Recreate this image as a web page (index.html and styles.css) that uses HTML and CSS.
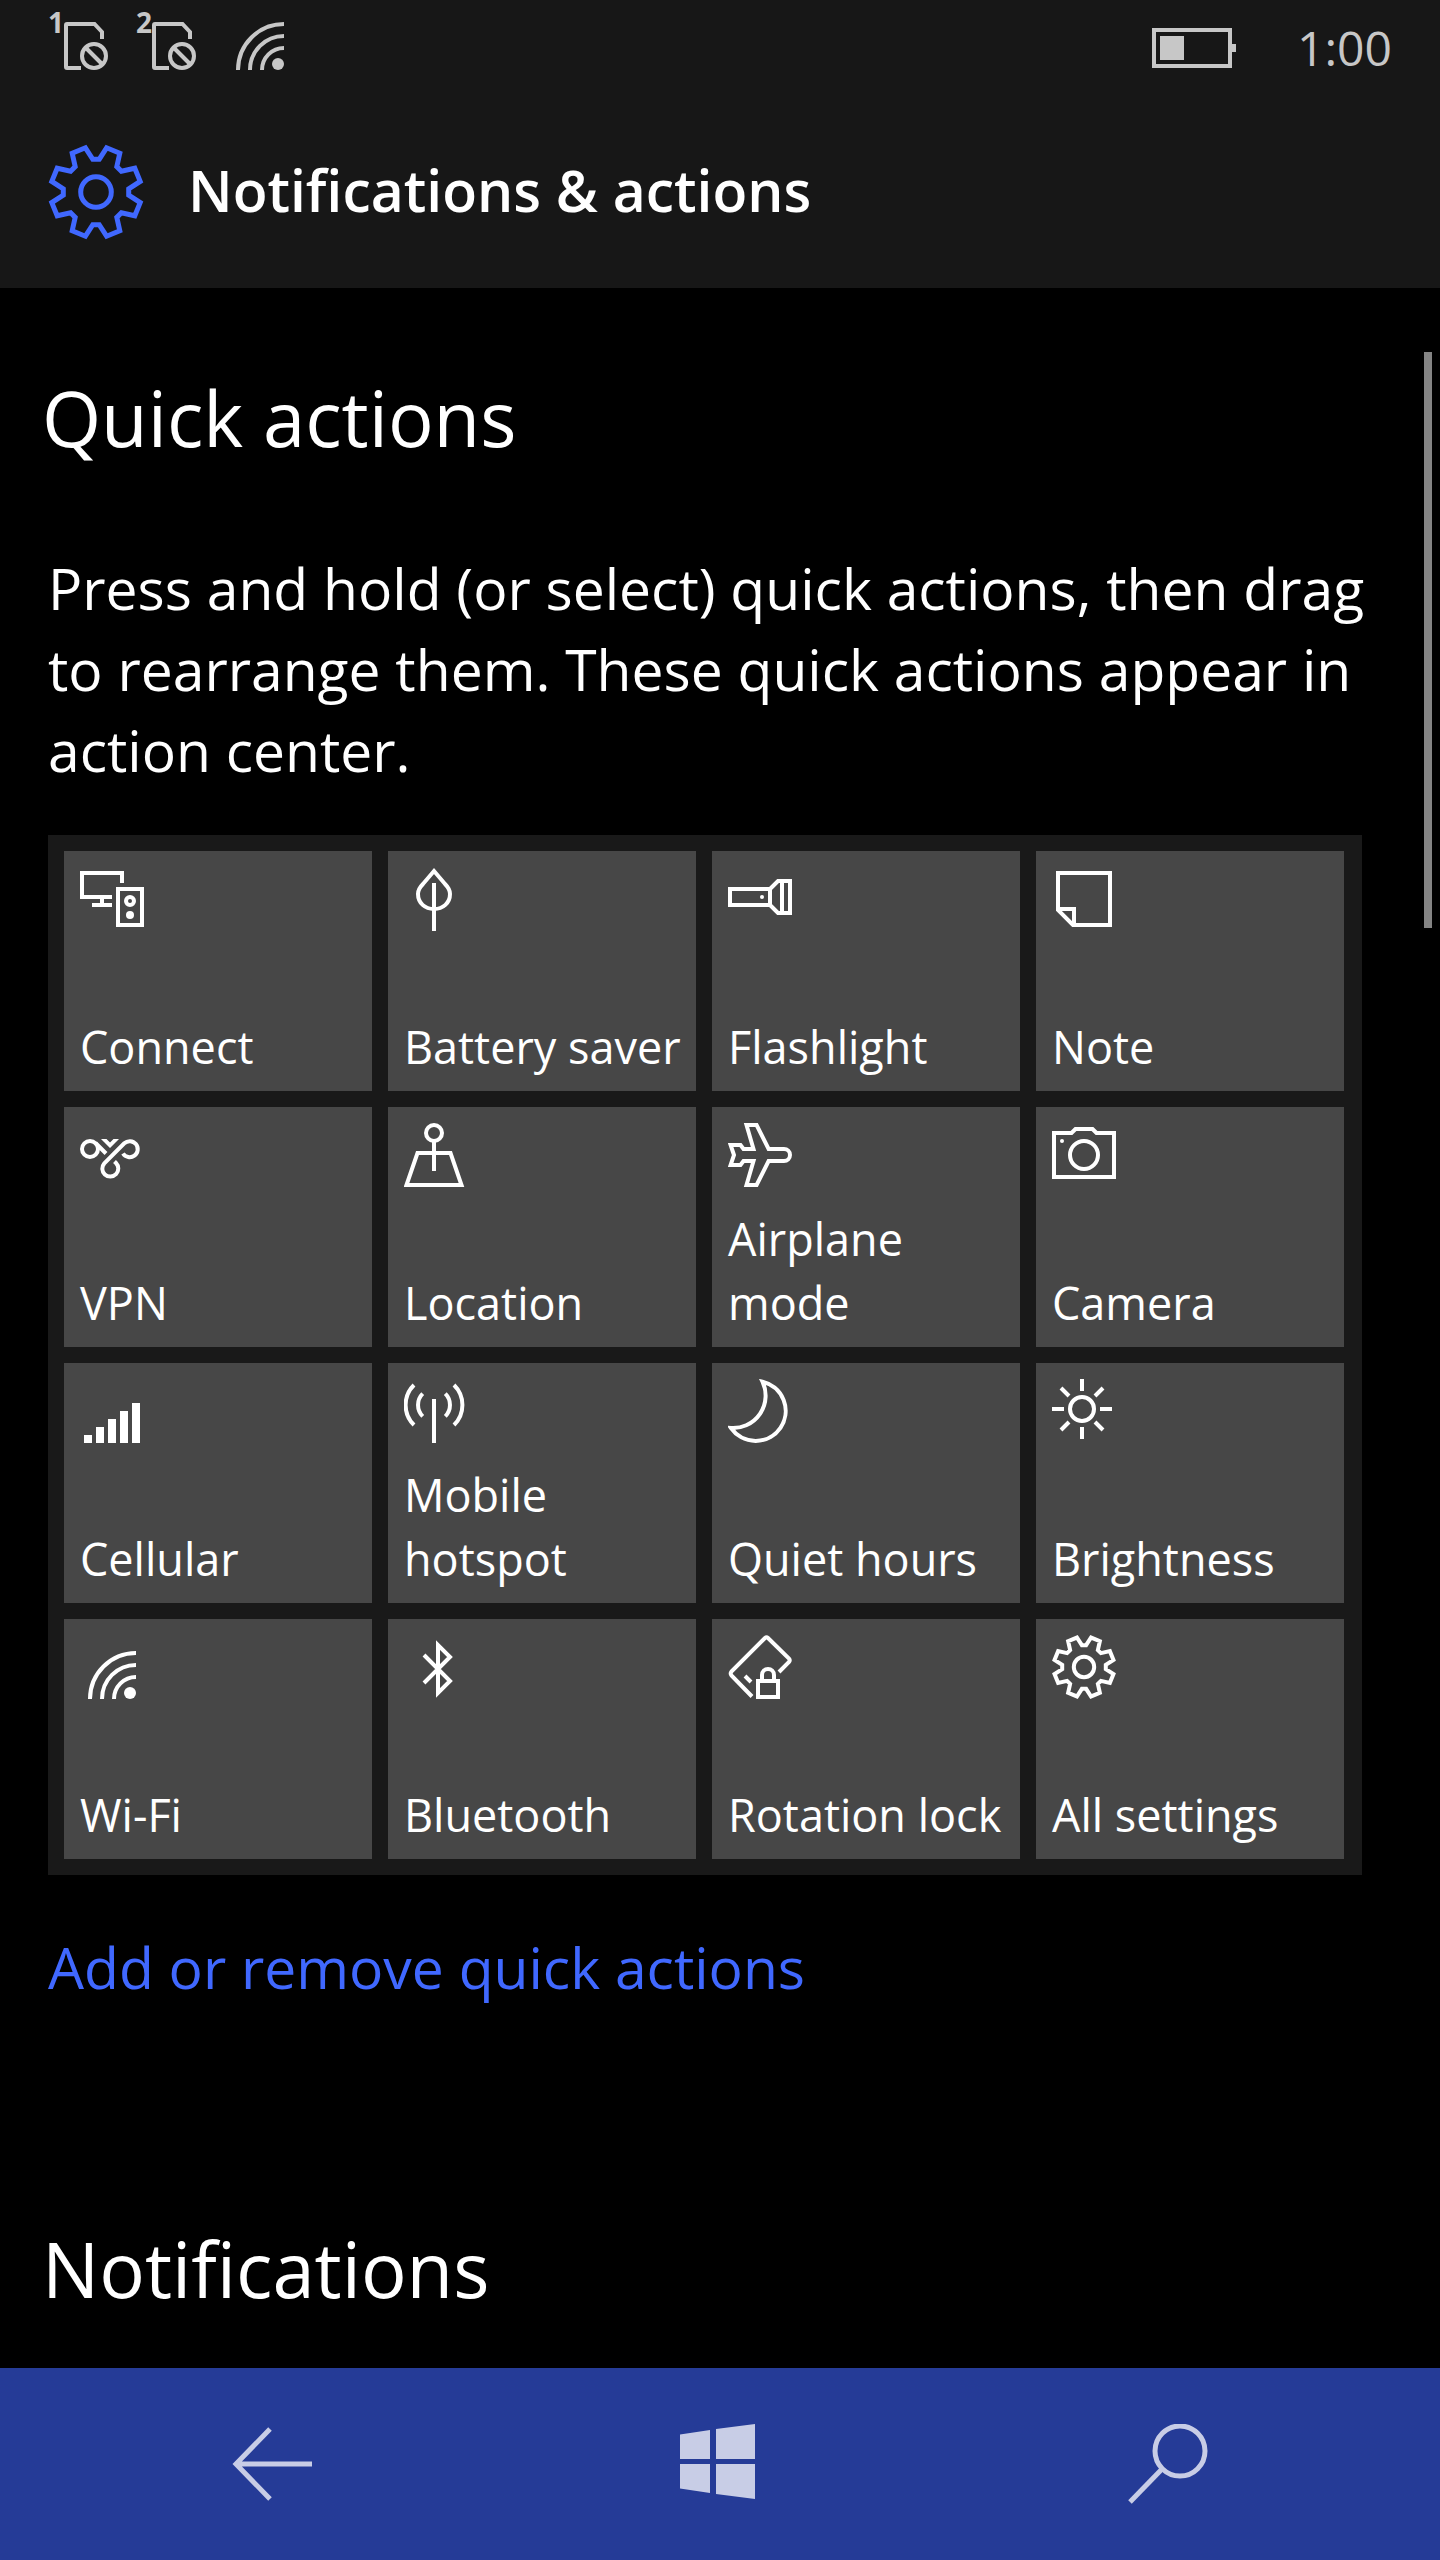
FILE: index.html
```html
<!DOCTYPE html>
<html lang="en">
<head>
<meta charset="utf-8">
<meta name="viewport" content="width=device-width, initial-scale=1">
<title>Notifications &amp; actions</title>
<link rel="stylesheet" href="styles.css">
</head>
<body>
<svg class="sprite" aria-hidden="true">
  <symbol id="gear" viewBox="-48 -48 96 96" overflow="visible">
    <path d="M3.2-32.7 10.6-44.2 23.8-38.8 20.8-25.4 25.4-20.8 38.8-23.8 44.2-10.6 32.7-3.2V3.2L44.2 10.6 38.8 23.8 25.4 20.8 20.8 25.4 23.8 38.8 10.6 44.2 3.2 32.7H-3.2L-10.6 44.2-23.8 38.8-20.8 25.4-25.4 20.8-38.8 23.8-44.2 10.6-32.7 3.2V-3.2L-44.2-10.6-38.8-23.8-25.4-20.8-20.8-25.4-23.8-38.8-10.6-44.2-3.2-32.7Z"/>
    <circle r="15.3"/>
  </symbol>
  <symbol id="wifi" viewBox="0 0 48 48">
    <path d="M2 48A46 46 0 0 1 48 2M14 48A34 34 0 0 1 48 14M26 48A22 22 0 0 1 48 26"/>
    <circle class="solid" cx="42" cy="42" r="6"/>
  </symbol>
  <symbol id="sim-off" viewBox="0 0 44 48">
    <path d="M17 46H3Q2 46 2 45V3Q2 2 3 2H30.500L38 10V17"/>
    <circle cx="30" cy="34" r="12"/>
    <path d="M22 26 38 42"/>
  </symbol>
</svg>

<header class="top">
  <div class="status">
    <div class="signals">
      <div class="sim"><span class="sim-number">1</span><svg class="line sim-icon" aria-hidden="true"><use href="#sim-off"/></svg></div>
      <div class="sim"><span class="sim-number">2</span><svg class="line sim-icon" aria-hidden="true"><use href="#sim-off"/></svg></div>
      <svg class="line status-wifi" aria-hidden="true"><use href="#wifi"/></svg>
    </div>
    <svg class="line battery" viewBox="0 0 84 40" aria-hidden="true"><path d="M2 2H78V38H2Z"/><path class="solid" d="M8 8H32V32H8ZM80 16H84V24H80Z"/></svg>
    <time class="clock">1:00</time>
  </div>
  <div class="title-bar">
    <svg class="line title-gear" aria-hidden="true"><use href="#gear"/></svg>
    <h1 class="title">Notifications &amp; actions</h1>
  </div>
</header>

<main class="content">
  <section>
    <h2 class="heading">Quick actions</h2>
    <p class="intro">Press and hold (or select) quick actions, then drag to rearrange them. These quick actions appear in action center.</p>
    <div class="tiles">
      <button class="tile" type="button">
        <svg class="line icon" viewBox="0 0 64 64" aria-hidden="true"><path d="M42 16V6H2V30H32M22 30V38M12 38H32M38 22H62V58H38Z"/><circle cx="50" cy="34" r="4"/><circle class="solid" cx="50" cy="48" r="4"/></svg>
        <span class="label">Connect</span>
      </button>
      <button class="tile" type="button">
        <svg class="line icon" viewBox="0 0 64 64" aria-hidden="true"><path d="M30 4 41 17Q46 22 46 27C46 36 39 42 30 42S14 36 14 27Q14 22 19 17ZM30 16V64"/></svg>
        <span class="label">Battery saver</span>
      </button>
      <button class="tile" type="button">
        <svg class="line icon" viewBox="0 0 64 64" aria-hidden="true"><path d="M2 22H42V38H2ZM42 22 50 14H62V46H50L42 38M54 14V46"/><circle class="solid" cx="34" cy="30" r="2"/></svg>
        <span class="label">Flashlight</span>
      </button>
      <button class="tile" type="button">
        <svg class="line icon" viewBox="0 0 64 64" aria-hidden="true"><path d="M6 43V6H58V58H21ZM6 42H22V58"/></svg>
        <span class="label">Note</span>
      </button>
      <button class="tile" type="button">
        <svg class="line icon" viewBox="0 0 64 64" aria-hidden="true"><circle cx="10" cy="26" r="8"/><path d="M15.500 20 26 30.500M43 30.500A8 8 0 1 0 44.300 20.300L24.300 40.300A8 8 0 1 0 36 40L34.500 38.500"/><path class="solid" d="M21 16H26.500L30 19.500 33.500 16H39L30 25Z"/></svg>
        <span class="label">VPN</span>
      </button>
      <button class="tile" type="button">
        <svg class="line icon" viewBox="0 0 64 64" aria-hidden="true"><circle cx="30" cy="10" r="8"/><path d="M30 18V48M13.500 30H46.500L57.500 62H2.500Z"/></svg>
        <span class="label">Location</span>
      </button>
      <button class="tile" type="button">
        <svg class="line icon" viewBox="0 0 64 64" aria-hidden="true"><path d="M18.500 2H28.600L40.600 26H56A6 6 0 0 1 56 38H40.600L28.600 62H18.500L25.500 38H15.500L12.500 42H2.600L6 32 2.600 22H12.500L15.500 26H25.500Z"/></svg>
        <span class="label">Airplane mode</span>
      </button>
      <button class="tile" type="button">
        <svg class="line icon" viewBox="0 0 64 64" aria-hidden="true"><path d="M2 10H19.500L23.500 6H40.500L44.500 10H62V54H2Z"/><circle cx="32" cy="32" r="14"/><circle class="solid" cx="10" cy="18" r="2"/></svg>
        <span class="label">Camera</span>
      </button>
      <button class="tile" type="button">
        <svg class="icon" viewBox="0 0 64 64" aria-hidden="true"><path d="M4 56H12V64H4ZM16 48H24V64H16ZM28 40H36V64H28ZM40 32H48V64H40ZM52 24H60V64H52Z" fill="currentColor"/></svg>
        <span class="label">Cellular</span>
      </button>
      <button class="tile" type="button">
        <svg class="line icon" viewBox="0 0 64 64" aria-hidden="true"><path d="M30 20V64M10 6A28 28 0 0 0 10 46M50 6A28 28 0 0 1 50 46M18.700 14.700A16 16 0 0 0 18.700 37.300M41.300 14.700A16 16 0 0 1 41.300 37.300"/></svg>
        <span class="label">Mobile hotspot</span>
      </button>
      <button class="tile" type="button">
        <svg class="line icon" viewBox="0 0 64 64" aria-hidden="true"><path d="M34.500 2.700A30 30 0 1 1 3 49A32.500 32.500 0 0 0 34.500 2.700Z"/></svg>
        <span class="label">Quiet hours</span>
      </button>
      <button class="tile" type="button">
        <svg class="line icon" viewBox="0 0 64 64" aria-hidden="true"><circle cx="30" cy="30" r="12"/><path d="M30 0V12M30 48V60M0 30H12M48 30H60M9 9 17 17M43 43 51 51M51 9 43 17M17 43 9 51"/></svg>
        <span class="label">Brightness</span>
      </button>
      <button class="tile" type="button">
        <svg class="line icon" viewBox="0 0 64 64" aria-hidden="true"><use href="#wifi" x="8" y="16" width="48" height="48"/></svg>
        <span class="label">Wi-Fi</span>
      </button>
      <button class="tile" type="button">
        <svg class="line icon" viewBox="0 0 64 64" aria-hidden="true"><path d="M20 20 46 46 34 58V10L46 22 20 48"/></svg>
        <span class="label">Bluetooth</span>
      </button>
      <button class="tile" type="button">
        <svg class="line icon" viewBox="0 0 64 64" aria-hidden="true"><path d="M24 61.500 3.400 40.400Q2 38.500 3.400 36.600L37 3Q38.500 1.600 40 3L61 23.600Q62.400 25.200 61 27L51 37M17 41 23 47M30 46H50V62H30ZM34 46V40A6 6 0 0 1 46 40V46"/></svg>
        <span class="label">Rotation lock</span>
      </button>
      <button class="tile" type="button">
        <svg class="line icon tile-gear" aria-hidden="true"><use href="#gear"/></svg>
        <span class="label">All settings</span>
      </button>
    </div>
    <a class="link" href="#quick-actions">Add or remove quick actions</a>
  </section>
  <section class="notifications">
    <h2 class="heading">Notifications</h2>
  </section>
  <div class="scroll-thumb"></div>
</main>

<nav class="nav">
  <button class="nav-button" type="button" aria-label="Back">
    <svg class="line nav-icon" viewBox="0 0 80 80" aria-hidden="true"><path d="M38 5 4 40 38 75M4 40H80"/></svg>
  </button>
  <button class="nav-button" type="button" aria-label="Start">
    <svg class="nav-icon" viewBox="0 0 80 80" aria-hidden="true"><path fill="currentColor" d="M0 10.500 30 6V35H0ZM36 5 75 0V35H36ZM0 40H30V69L0 64.500ZM36 40H75V75L36 70Z"/></svg>
  </button>
  <button class="nav-button" type="button" aria-label="Search">
    <svg class="line nav-icon" viewBox="0 0 80 80" aria-hidden="true"><circle cx="52" cy="27" r="25"/><path d="M34 45 2 78"/></svg>
  </button>
</nav>
</body>
</html>
```
FILE: styles.css
```css
* {
  box-sizing: border-box;
}

body {
  margin: 0;
  min-height: 100vh;
  display: flex;
  flex-direction: column;
  background: #000;
  color: #fff;
  font-family: "Open Sans", "Noto Sans", sans-serif;
}

h1, h2, p {
  margin: 0;
  font-weight: 400;
}

button {
  border: 0;
  padding: 0;
  background: none;
  color: inherit;
  font: inherit;
  cursor: pointer;
}

.sprite {
  position: absolute;
  width: 0;
  height: 0;
}

.line {
  fill: none;
  stroke: currentColor;
  stroke-width: 4;
}

.solid {
  fill: currentColor;
  stroke: none;
}

/* Status bar and page title */

.top {
  background: #171717;
}

.status {
  height: 96px;
  padding: 0 48px;
  display: flex;
  align-items: center;
  gap: 28px;
  color: #c7c7c7;
}

.signals {
  display: flex;
  gap: 28px;
  margin-bottom: 4px;
}

.sim {
  display: flex;
}

.sim-number {
  width: 16px;
  margin-top: -16px;
  font-size: 28px;
  line-height: 32px;
  font-weight: 700;
}

.sim-icon {
  width: 44px;
  height: 48px;
}

.status-wifi {
  width: 48px;
  height: 48px;
  margin-left: 12px;
}

.battery {
  width: 84px;
  height: 40px;
  margin-left: auto;
}

.clock {
  width: 128px;
  font-size: 48px;
  line-height: 64px;
  text-align: right;
}

.title-bar {
  height: 192px;
  padding: 0 48px;
  display: flex;
  align-items: center;
  gap: 44px;
}

.title-gear {
  width: 96px;
  height: 96px;
  color: #4068ff;
  stroke-width: 5;
}

.title {
  margin-bottom: 4px;
  font-size: 57px;
  line-height: 80px;
  font-weight: 600;
}

/* Page body */

.content {
  position: relative;
  flex: 1;
  padding: 74px 48px 0;
}

.heading {
  margin-left: -6px;
  font-size: 76px;
  line-height: 112px;
}

.intro {
  margin: 74px 0 44px;
  font-size: 57px;
  line-height: 81px;
}

.tiles {
  display: grid;
  grid-template-columns: repeat(4, 1fr);
  grid-auto-rows: minmax(240px, auto);
  gap: 16px;
  margin-right: 30px;
  padding: 16px 18px 16px 16px;
  background: #191919;
}

.tile {
  display: flex;
  flex-direction: column;
  align-items: flex-start;
  justify-content: space-between;
  padding: 16px 0 12px 16px;
  background: #474747;
  text-align: left;
}

.icon {
  width: 64px;
  height: 64px;
  flex: none;
}

.tile-gear {
  stroke-width: 6;
}

.label {
  font-size: 45px;
  line-height: 64px;
}

.link {
  display: block;
  margin-top: 52px;
  color: #4068ff;
  font-size: 57px;
  line-height: 80px;
  text-decoration: none;
}

.notifications {
  margin-top: 206px;
}

.scroll-thumb {
  position: absolute;
  top: 64px;
  right: 8px;
  width: 8px;
  height: 576px;
  background: #848484;
}

/* Navigation bar */

.nav {
  display: flex;
  height: 192px;
  padding: 0 48px;
  background: #253b97;
  color: #c8cde6;
}

.nav-button {
  flex: 1;
  display: flex;
  align-items: center;
  justify-content: center;
}

.nav-icon {
  width: 80px;
  height: 80px;
  stroke-width: 5;
}
```
